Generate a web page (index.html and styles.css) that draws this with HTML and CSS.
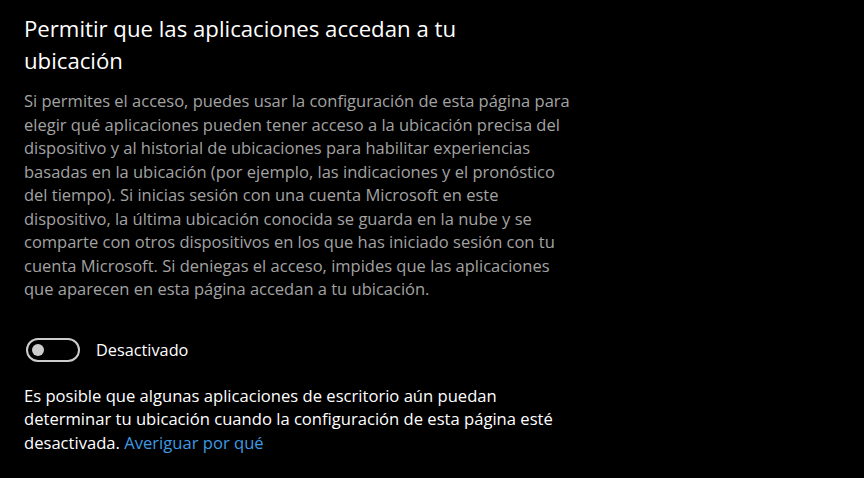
FILE: index.html
```html
<!DOCTYPE html>
<html lang="es">
<head>
<meta charset="utf-8">
<title>Ubicación</title>
<link rel="stylesheet" href="styles.css">
</head>
<body>
<main class="page">
  <h1 class="title">Permitir que las aplicaciones accedan a tu ubicación</h1>
  <p class="desc">Si permites el acceso, puedes usar la configuración de esta página para elegir qué aplicaciones pueden tener acceso a la ubicación precisa del dispositivo y al historial de ubicaciones para habilitar experiencias basadas en la ubicación (por ejemplo, las indicaciones y el pronóstico del tiempo). Si inicias sesión con una cuenta Microsoft en este dispositivo, la última ubicación conocida se guarda en la nube y se comparte con otros dispositivos en los que has iniciado sesión con tu cuenta Microsoft. Si deniegas el acceso, impides que las aplicaciones que aparecen en esta página accedan a tu ubicación.</p>
  <div class="toggle-row">
    <span class="toggle"><span class="knob"></span></span>
    <span class="toggle-label">Desactivado</span>
  </div>
  <p class="note">Es posible que algunas aplicaciones de escritorio aún puedan determinar tu ubicación cuando la configuración de esta página esté desactivada. <a class="link" href="#">Averiguar por qué</a></p>
</main>
</body>
</html>
```
FILE: styles.css
```css
html, body {
  margin: 0;
  padding: 0;
  background: #000;
}
body {
  font-family: "Open Sans", "Noto Sans", sans-serif;
  color: #fff;
}
.page {
  display: flex;
  flex-direction: column;
  align-items: flex-start;
  padding: 13px 0 0 24px;
}
.title {
  margin: 0;
  font-size: 22.2px;
  font-weight: 400;
  line-height: 32px;
  width: 490px;
}
.desc {
  margin: 12px 0 0;
  width: 553px;
  font-size: 16.5px;
  line-height: 23.5px;
  color: #a3a3a3;
  font-weight: 400;
}
.toggle-row {
  display: flex;
  align-items: center;
  gap: 16px;
  margin-top: 37px;
  margin-left: 2px;
}
.toggle {
  box-sizing: border-box;
  width: 54px;
  height: 24px;
  border: 2px solid #cccccc;
  border-radius: 12px;
  display: flex;
  align-items: center;
  padding-left: 4px;
}
.knob {
  width: 12px;
  height: 12px;
  border-radius: 50%;
  background: #cccccc;
}
.toggle-label {
  font-size: 16.3px;
  line-height: 24px;
}
.note {
  margin: 22px 0 0;
  width: 545px;
  font-size: 16.6px;
  line-height: 23.5px;
}
.link {
  color: #3f9ae2;
  text-decoration: none;
}
```
